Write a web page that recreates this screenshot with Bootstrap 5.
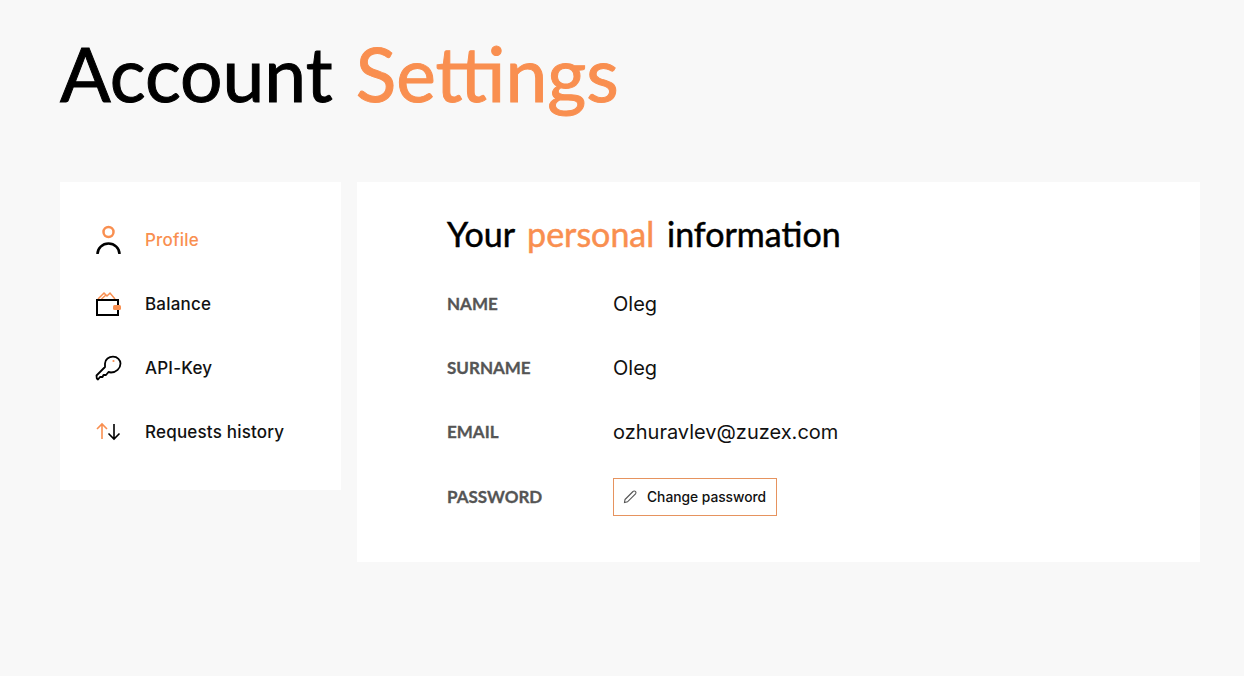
<!DOCTYPE html>
<html lang="en">
<head>
    <meta charset="UTF-8">
    <meta name="viewport" content="width=device-width, initial-scale=1.0">
    <title>Account Settings</title>
    <link rel="stylesheet" href="https://cdn.jsdelivr.net/npm/bootstrap@5.3.0/dist/css/bootstrap.min.css">
    <style>
        body {
            background-color: #f8f8f8;
            color: #111;
            font-family: Lato, "Open Sans", sans-serif;
        }
        .page-wrap {
            padding: 0 44px 0 60px;
        }
        .page-title {
            font-family: Lato, sans-serif;
            font-size: 75px;
            line-height: 92px;
            font-weight: 400;
            word-spacing: 4px;
            -webkit-text-stroke: 1px currentColor;
            color: #000;
            margin: 0;
            padding-top: 27px;
            height: 182px;
        }
        .accent {
            color: #f98f50;
        }
        .side-box {
            width: 281px;
            height: 308px;
            padding: 26px 0 26px 35px;
            background: #fff;
            flex-shrink: 0;
        }
        .side-link {
            height: 64px;
            padding-top: 2px;
            color: #111;
            font-family: Inter, sans-serif;
            font-size: 17px;
            font-weight: 500;
            letter-spacing: .2px;
            text-decoration: none;
        }
        .side-link.active-link {
            color: #f98f50;
        }
        .side-icon {
            width: 27px;
            height: 32px;
            margin: -2px 23px 0 0;
            flex-shrink: 0;
        }
        .main-box {
            height: 380px;
            margin-left: 16px;
            padding: 25px 90px;
            background: #fff;
        }
        .main-title {
            font-family: Lato, sans-serif;
            font-size: 34px;
            line-height: 54px;
            font-weight: 400;
            word-spacing: 4px;
            -webkit-text-stroke: .5px currentColor;
            color: #000;
            margin: 0 0 11px;
        }
        .info-row {
            height: 64px;
        }
        .info-row.pw-row {
            padding-top: 2px;
        }
        .info-label {
            width: 166px;
            font-family: Lato, sans-serif;
            font-size: 17px;
            font-weight: 700;
            -webkit-text-stroke: .3px currentColor;
            color: #555;
        }
        .info-value {
            font-family: Inter, sans-serif;
            font-size: 20px;
            color: #111;
        }
        .pw-btn {
            width: 164px;
            height: 38px;
            padding: 0 0 0 9px;
            border: 1px solid #e6935f;
            border-radius: 0;
            background: #fff;
            color: #111;
            font-family: Inter, sans-serif;
            font-size: 13.8px;
            font-weight: 500;
            letter-spacing: -.02px;
        }
        .pw-btn svg {
            margin: -2px 9px 0 0;
        }
    </style>
</head>
<body>
    <div class="page-wrap">
        <h1 class="page-title">Account <span class="accent">Settings</span></h1>

        <div class="d-flex align-items-start">
            <nav class="side-box">
                <a href="#" class="side-link active-link d-flex align-items-center">
                    <svg class="side-icon" viewBox="0 0 27 32" fill="none" stroke-width="2.500">
                        <circle cx="13.500" cy="8" r="5" stroke="#f98f50"/>
                        <path d="M2.500 30a11 10.500 0 0 1 22 0" stroke="#000"/>
                    </svg>
                    Profile
                </a>
                <a href="#" class="side-link d-flex align-items-center">
                    <svg class="side-icon" viewBox="0 0 27 32" fill="none">
                        <path d="M3 11l6-6 3 3 3-3 5 6M6.500 11L11 7" stroke="#f98f50" stroke-width="1.500"/>
                        <rect x="2" y="12" width="21" height="15" stroke="#000" stroke-width="2"/>
                        <rect x="18" y="17" width="8" height="5" rx="1.500" fill="#f98f50"/>
                    </svg>
                    Balance
                </a>
                <a href="#" class="side-link d-flex align-items-center">
                    <svg class="side-icon" viewBox="0 0 27 32" fill="none">
                        <path d="M10 11.500C10 7 14 4.700 18 4.700c4.500 0 7.500 3.300 7.500 6.800 0 5-4.500 9-9.500 9l-2.500-.5-2.500 3H8.500l-1 2H5l-2 2.500-1.200-1-.3-3L10 15c0-1 0-2.500 0-3.500z" stroke="#000" stroke-width="1.800" stroke-linejoin="round"/>
                        <circle cx="18.500" cy="9" r="1.100" fill="#f98f50"/>
                    </svg>
                    API-Key
                </a>
                <a href="#" class="side-link d-flex align-items-center">
                    <svg class="side-icon" viewBox="0 0 27 32" fill="none" stroke-width="1.600">
                        <path d="M7 23V8M2 13l5-5 5 5" stroke="#f98f50"/>
                        <path d="M19 8v15M13.500 17.500l5.500 5.500 5.500-5.500" stroke="#000"/>
                    </svg>
                    Requests history
                </a>
            </nav>

            <main class="main-box flex-grow-1">
                <h2 class="main-title">Your <span class="accent">personal</span> information</h2>
                <div class="info-row d-flex align-items-center">
                    <div class="info-label">NAME</div>
                    <div class="info-value">Oleg</div>
                </div>
                <div class="info-row d-flex align-items-center">
                    <div class="info-label">SURNAME</div>
                    <div class="info-value">Oleg</div>
                </div>
                <div class="info-row d-flex align-items-center">
                    <div class="info-label">EMAIL</div>
                    <div class="info-value">ozhuravlev@zuzex.com</div>
                </div>
                <div class="info-row pw-row d-flex align-items-center">
                    <div class="info-label">PASSWORD</div>
                    <button type="button" class="btn pw-btn d-flex align-items-center">
                        <svg width="15" height="15" viewBox="0 0 15 15" fill="none" stroke="#555" stroke-width="1.100">
                            <path d="M2 10.500L10 2.500a1.600 1.600 0 0 1 2.500 2.300L4.500 12.800 1.500 13.500z"/>
                        </svg>
                        Change password
                    </button>
                </div>
            </main>
        </div>
    </div>
    <script src="https://cdn.jsdelivr.net/npm/bootstrap@5.3.0/dist/js/bootstrap.bundle.min.js"></script>
</body>
</html>
